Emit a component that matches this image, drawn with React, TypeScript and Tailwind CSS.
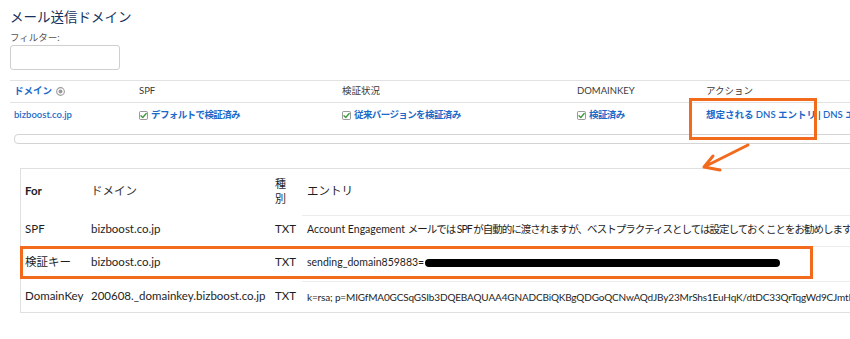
import React from 'react'

const FONT = "font-['Lato','Noto_Sans_CJK_JP',sans-serif]"

function CheckIcon() {
  return (
    <svg width="9" height="9" viewBox="0 0 10 10" className="shrink-0">
      <rect x="0.5" y="0.5" width="9" height="9" rx="1.5" fill="none" stroke="#8a8a8a" strokeWidth="1" />
      <path d="M2.2 5.2 L4.2 7.2 L8 2.8" fill="none" stroke="#3d9a3d" strokeWidth="1.5" strokeLinecap="round" strokeLinejoin="round" />
    </svg>
  )
}

function SortIcon() {
  return (
    <svg width="9" height="9" viewBox="0 0 10 10" className="shrink-0">
      <circle cx="5" cy="5" r="4.3" fill="#fff" stroke="#9a9a9a" strokeWidth="1.2" />
      <circle cx="5" cy="5" r="2.2" fill="#9a9a9a" />
    </svg>
  )
}

function Verified({ label }: { label: string }) {
  return (
    <span className="flex items-center gap-[3px] text-[#1b6ac9] font-semibold tracking-[-0.6px]">
      <CheckIcon />
      {label}
    </span>
  )
}

const entryRows = [
  {
    for: 'SPF',
    domain: 'bizboost.co.jp',
    type: 'TXT',
    entry: (
      <>
        <span className="text-[10.5px]">Account Engagement&nbsp;</span>
        <span className="text-[10.5px] tracking-[-1px]">
          メールでは SPF が自動的に渡されますが、ベストプラクティスとしては設定しておくことをお勧めします。
        </span>
      </>
    ),
    h: 'h-[31px]',
  },
  {
    for: '検証キー',
    domain: 'bizboost.co.jp',
    type: 'TXT',
    entry: (
      <>
        <span className="text-[10.5px]">sending_domain859883=</span>
        <span className="ml-[1px] w-[355px] h-[8px] rounded-full bg-black" />
      </>
    ),
    h: 'h-[35px]',
  },
  {
    for: 'DomainKey',
    domain: '200608._domainkey.bizboost.co.jp',
    type: 'TXT',
    entry: (
      <span className="text-[10px] tracking-[-0.15px]">
        k=rsa; p=MIGfMA0GCSqGSIb3DQEBAQUAA4GNADCBiQKBgQDGoQCNwAQdJBy23MrShs1EuHqK/dtDC33QrTqgWd9CJmtPqR
      </span>
    ),
    h: 'h-[33px]',
  },
]

export default function App() {
  return (
    <div className={`relative w-[850px] h-[339px] overflow-hidden bg-white ${FONT}`}>
      {/* Heading + filter */}
      <div className="pl-[10px] pt-[7px]">
        <h1 className="h-[20px] leading-[20px] text-[13.5px] font-normal text-[#16325c]">
          メール送信ドメイン
        </h1>
        <div className="mt-[5px] h-[12px] leading-[12px] text-[9.5px] text-[#555]">フィルター:</div>
        <div className="mt-[1px] w-[110px] h-[25px] border border-[#cfcfcf] rounded-[3px]" />
      </div>

      {/* Domain table */}
      <div className="mt-[10px] ml-[10px] w-[900px] text-[9.5px]">
        <div className="grid grid-cols-[125px_203px_235px_129px_1fr] h-[23px] items-center border-t border-b border-[#e2e2e2] pl-[4px] text-[#3a3a3a]">
          <span className="flex items-center gap-[4px] text-[#1b6ac9] font-semibold">
            ドメイン
            <SortIcon />
          </span>
          <span>SPF</span>
          <span>検証状況</span>
          <span>DOMAINKEY</span>
          <span>アクション</span>
        </div>
        <div className="grid grid-cols-[125px_203px_235px_129px_1fr] h-[24px] items-center pl-[4px]">
          <span className="text-[#1b6ac9] font-semibold">bizboost.co.jp</span>
          <Verified label="デフォルトで検証済み" />
          <Verified label="従来バージョンを検証済み" />
          <Verified label="検証済み" />
          <span className="whitespace-nowrap text-[#1b6ac9] font-semibold">
            想定される DNS エントリ <span className="text-[#333]">|</span> DNS エントリを確認
          </span>
        </div>
        <div className="mt-[7px] ml-[4px] h-[10px] border border-[#d4d4d4] rounded-[4px]" />
      </div>

      {/* Expected DNS entries */}
      <div className="mt-[24px] ml-[20px] w-[900px] border border-[#e0e0e0] text-[11.5px] text-[#1e1e1e]">
        <div className="grid grid-cols-[66px_184px_31px_1fr] h-[44px] items-center">
          <span className="pl-[4px] font-bold">For</span>
          <span className="pl-[4px] text-[#333]">ドメイン</span>
          <span className="pl-[4px] w-[24px] leading-[15px] text-[11px]">種別</span>
          <span className="pl-[5px]">エントリ</span>
        </div>
        {entryRows.map(r => (
          <div key={r.for} className={`grid grid-cols-[66px_184px_31px_1fr] ${r.h} items-center`}>
            <span className="pl-[4px]">{r.for}</span>
            <span className="pl-[4px]">{r.domain}</span>
            <span className="pl-[4px]">{r.type}</span>
            <div className="self-stretch flex items-center border-t border-[#ececec] mt-[2px] pl-[5px] whitespace-nowrap">
              {r.entry}
            </div>
          </div>
        ))}
      </div>

      {/* Annotations */}
      <div className="absolute left-[689px] top-[98px] w-[128px] h-[42px] border-[3px] border-[#f26a1b]" />
      <div className="absolute left-[20px] top-[246px] w-[793px] h-[33px] border-[3px] border-[#f26a1b]" />
      <svg className="absolute left-0 top-0" width="850" height="339">
        <path
          d="M748 145 L704 167 M704 167 L713 156 M704 167 L720 170"
          fill="none"
          stroke="#f26a1b"
          strokeWidth="3"
          strokeLinecap="round"
          strokeLinejoin="round"
        />
      </svg>
    </div>
  )
}
